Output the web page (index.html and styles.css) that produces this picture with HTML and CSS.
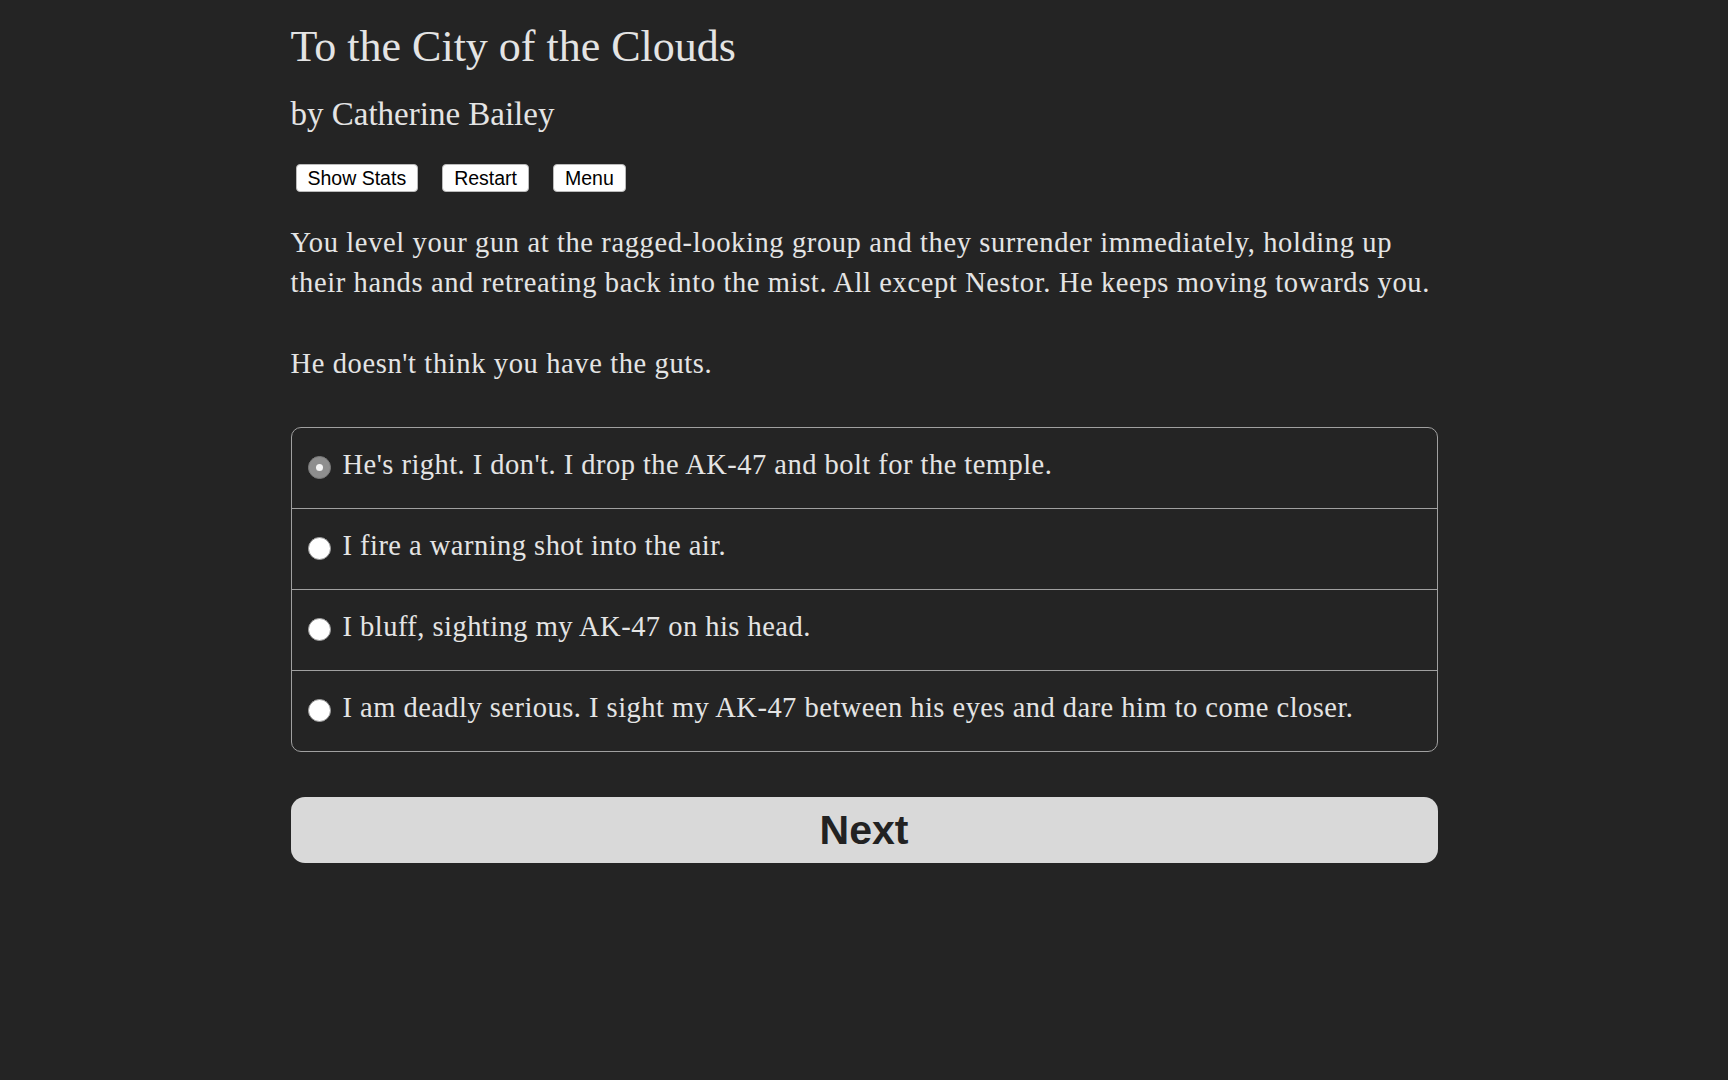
FILE: index.html
```html
<!DOCTYPE html>
<html lang="en">
<head>
<meta charset="utf-8">
<title>To the City of the Clouds</title>
<link rel="stylesheet" href="styles.css">
</head>
<body>
<main class="page">
  <h1 class="title">To the City of the Clouds</h1>
  <h2 class="author">by Catherine Bailey</h2>
  <div class="toolbar">
    <button class="tool-btn">Show Stats</button>
    <button class="tool-btn">Restart</button>
    <button class="tool-btn">Menu</button>
  </div>
  <p class="story">You level your gun at the ragged-looking group and they surrender immediately, holding up their hands and retreating back into the mist. All except Nestor. He keeps moving towards you.</p>
  <p class="story">He doesn't think you have the guts.</p>
  <form class="choices">
    <label class="choice"><span class="radio radio-checked"></span><span class="choice-text">He's right. I don't. I drop the AK-47 and bolt for the temple.</span></label>
    <label class="choice"><span class="radio"></span><span class="choice-text">I fire a warning shot into the air.</span></label>
    <label class="choice"><span class="radio"></span><span class="choice-text">I bluff, sighting my AK-47 on his head.</span></label>
    <label class="choice"><span class="radio"></span><span class="choice-text">I am deadly serious. I sight my AK-47 between his eyes and dare him to come closer.</span></label>
  </form>
  <button class="next-btn">Next</button>
</main>
</body>
</html>
```
FILE: styles.css
```css
html, body {
  margin: 0;
  padding: 0;
  background: #242424;
}
body {
  color: #e4e4e4;
  font-family: "Liberation Serif", "Times New Roman", serif;
}
.page {
  width: 1147px;
  margin: 0 auto;
  padding-top: 19px;
}
.title {
  margin: 0;
  font-size: 44px;
  line-height: 56px;
  font-weight: normal;
}
.author {
  margin: 17px 0 0;
  font-size: 33px;
  line-height: 44px;
  font-weight: normal;
}
.toolbar {
  display: flex;
  gap: 24px;
  margin-top: 28px;
  padding-left: 5px;
}
.tool-btn {
  height: 28px;
  padding: 0 11px;
  background: #fff;
  color: #000;
  border: 1px solid #bbb;
  border-radius: 4px;
  font-family: "Liberation Sans", Arial, sans-serif;
  font-size: 19.5px;
  line-height: 26px;
}
.story {
  margin: 31px 0 0;
  font-size: 28.5px;
  line-height: 40px;
  letter-spacing: 0.62px;
}
.story + .story {
  margin-top: 41px;
}
.choices {
  margin: 43px 0 0;
  border: 1px solid #a0a0a0;
  border-radius: 10px;
  overflow: hidden;
}
.choice {
  display: flex;
  align-items: center;
  gap: 12px;
  padding: 17px 16px 23px;
  font-size: 28.5px;
  line-height: 40px;
  letter-spacing: 0.47px;
}
.choice + .choice {
  border-top: 1px solid #a0a0a0;
}
.radio {
  flex: none;
  width: 21px;
  height: 21px;
  border-radius: 50%;
  background: #fff;
  border: 1px solid #9a9a9a;
  box-sizing: content-box;
  position: relative;
  top: 2px;
}
.radio-checked {
  background: #8e8e8e;
  border-color: #7a7a7a;
}
.radio-checked::after {
  content: "";
  position: absolute;
  left: 7px;
  top: 7px;
  width: 7px;
  height: 7px;
  border-radius: 50%;
  background: #f4f4f4;
}
.next-btn {
  display: block;
  width: 100%;
  height: 66px;
  margin-top: 45px;
  background: #d9d9d9;
  color: #222;
  border: none;
  border-radius: 14px;
  font-family: "Liberation Sans", Arial, sans-serif;
  font-weight: bold;
  font-size: 41px;
}
```
